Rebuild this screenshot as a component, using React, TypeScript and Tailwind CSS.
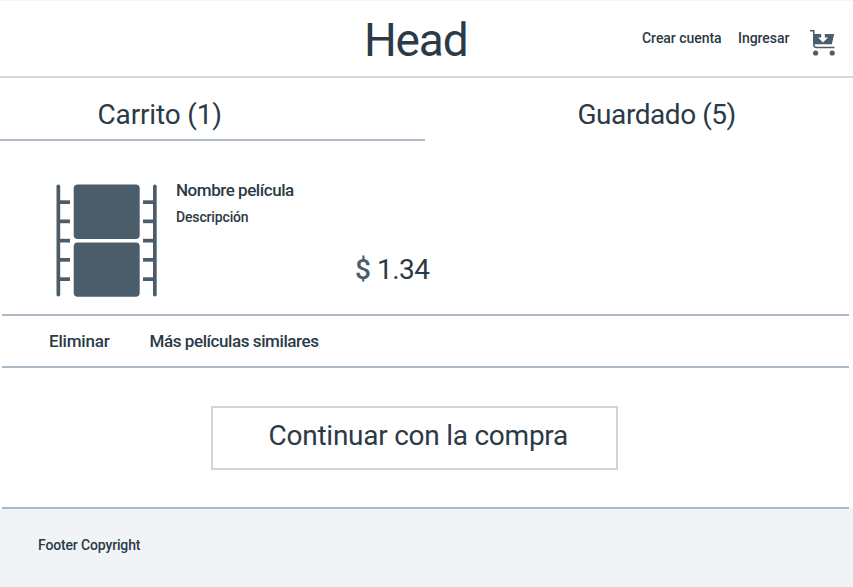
function CartIcon() {
  return (
    <svg className="block h-[26px] w-[25px]" viewBox="0 0 25 26" fill="none">
      <path d="M0 .8H3.8V14.5Q3.8 17.5 6.5 17.5H24.5" stroke="#4b5c6a" strokeWidth="1.5" />
      <path d="M3.5 4H24.2L21.8 14.3H3.5Z" fill="#4b5c6a" />
      <path d="M11.2 3.8H14.8V7.5H18L13 12.4L8 7.5H11.2Z" fill="#fff" />
      <circle cx="5.6" cy="23" r="2.6" fill="#4b5c6a" />
      <circle cx="22.2" cy="23" r="2.6" fill="#4b5c6a" />
    </svg>
  );
}

function FilmIcon() {
  return (
    <svg className="block h-[113px] w-[101px]" viewBox="0 0 101 113" fill="#4b5c6a">
      <rect x=".5" y=".5" width="3.7" height="112" rx="1.8" />
      <rect x="97" y=".5" width="3.7" height="112" rx="1.8" />
      {[16.3, 35.5, 54.8, 74, 93.3].map((y) => (
        <g key={y}>
          <rect x="2" y={y} width="12" height="3.7" />
          <rect x="87" y={y} width="12" height="3.7" />
        </g>
      ))}
      <rect x="17.7" y=".6" width="66" height="54.4" rx="4" />
      <rect x="17.7" y="58.5" width="66" height="54.3" rx="4" />
    </svg>
  );
}

export default function App() {
  return (
    <div className="flex h-[587px] w-[853px] flex-col overflow-hidden whitespace-nowrap bg-white font-['Roboto',sans-serif] text-[#2b3a47]">
      <header className="flex h-[78px] shrink-0 border-t border-b-2 border-t-[#f4f5f6] border-b-[#d0dae4]">
        <h1 className="ml-[364px] mt-[9px] w-[278px] text-[46px] leading-[60px] tracking-[-1.2px]">Head</h1>
        <nav className="flex pt-[27px] text-[14px] font-medium leading-[21px] tracking-[-0.04px]">
          <a className="w-[96px]">Crear cuenta</a>
          <a className="w-[72px]">Ingresar</a>
          <div className="pt-[2px]"><CartIcon /></div>
        </nav>
      </header>
      <div className="flex h-[63px] shrink-0 text-[28px] leading-[40px]">
        <div className="w-[425px] border-b-2 border-[#adb9c5] pl-[97.5px] pt-[17px] tracking-[-0.15px]">Carrito (1)</div>
        <div className="pl-[152.5px] pt-[17px] tracking-[-0.45px]">Guardado (5)</div>
      </div>
      <section className="flex h-[173px] shrink-0 pl-[56px] pt-[43px]">
        <FilmIcon />
        <div className="ml-[19px] w-[179px]">
          <div className="-mt-[4px] h-[27px] text-[17px] font-medium leading-5 tracking-[-0.45px]">Nombre película</div>
          <div className="text-[14px] font-medium leading-[21px] tracking-[-0.15px]">Descripción</div>
        </div>
        <div className="flex pt-[66px] text-[28px] leading-[40px]">
          <span className="w-[22px] font-medium text-[#4b5c6a]">$</span>
          <span className="tracking-[-0.5px]">1.34</span>
        </div>
      </section>
      <div className="ml-[2px] flex h-[54px] w-[847px] shrink-0 border-y-2 border-[#adb9c5] pl-[47px] pt-[15px] text-[17px] font-medium leading-5 tracking-[-0.42px]">
        <a className="w-[100.5px] tracking-[-0.2px]">Eliminar</a>
        <a>Más películas similares</a>
      </div>
      <main className="h-[139px] shrink-0 pl-[211px] pt-[38px]">
        <button className="flex h-[64px] w-[407px] border-2 border-[#ccd6df] pl-[55.5px] pt-[8px] text-[28px] leading-[40px] tracking-[-0.25px]">
          Continuar con la compra
        </button>
      </main>
      <footer className="h-[80px] shrink-0 bg-[#f0f4f7]">
        <div className="flex h-[2px]">
          <div className="w-[2px] bg-white" />
          <div className="w-[847px] bg-[#adb9c5]" />
        </div>
        <div className="pl-[38px] pt-[26px] text-[14px] font-medium leading-[21px] tracking-[-0.15px]">Footer Copyright</div>
      </footer>
    </div>
  );
}
